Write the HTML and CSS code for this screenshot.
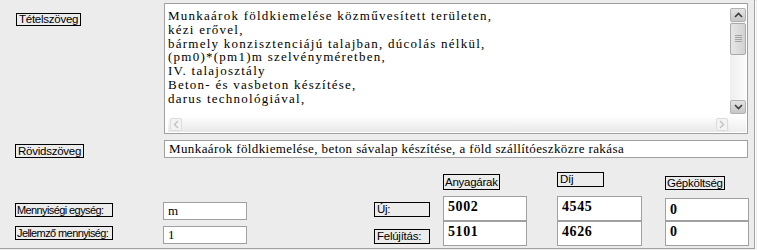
FILE: index.html
```html
<!DOCTYPE html>
<html lang="hu">
<head>
<meta charset="utf-8">
<title>Tétel</title>
<link rel="stylesheet" href="styles.css">
</head>
<body>
<div class="page">
  <div class="row row-memo">
    <div class="cell-label cell-first"><span class="lbl lbl-first">Tételszöveg</span></div>
    <div class="memo">
      <div class="memo-text">Munkaárok földkiemelése közművesített területen,<br>kézi erővel,<br>bármely konzisztenciájú talajban, dúcolás nélkül,<br>(pm0)*(pm1)m szelvényméretben,<br>IV. talajosztály<br>Beton- és vasbeton készítése,<br>darus technológiával,</div>
      <div class="vscroll">
        <div class="sb-btn"><svg width="9" height="6" viewBox="0 0 9 6"><polyline points="1,5 4.5,1.5 8,5" fill="none" stroke="#3c3c3c" stroke-width="1.6"/></svg></div>
        <div class="sb-thumb"><svg width="7" height="8" viewBox="0 0 7 8"><path d="M0 .5h7M0 2.5h7M0 4.5h7M0 6.5h7" stroke="#a4a4a4" stroke-width="1"/></svg></div>
        <div class="sb-fill"></div>
        <div class="sb-btn"><svg width="9" height="6" viewBox="0 0 9 6"><polyline points="1,1 4.5,4.5 8,1" fill="none" stroke="#3c3c3c" stroke-width="1.6"/></svg></div>
      </div>
      <div class="hscroll">
        <div class="hb"><svg width="6" height="9" viewBox="0 0 6 9"><polyline points="5,1 1.5,4.5 5,8" fill="none" stroke="#c4c4c4" stroke-width="1.5"/></svg></div>
        <div class="hb"><svg width="6" height="9" viewBox="0 0 6 9"><polyline points="1,1 4.5,4.5 1,8" fill="none" stroke="#c4c4c4" stroke-width="1.5"/></svg></div>
      </div>
      <div class="corner"></div>
    </div>
  </div>

  <div class="row row-short">
    <div class="cell-label cell-short"><span class="lbl">Rövidszöveg</span></div>
    <div class="field field-wide">Munkaárok földkiemelése, beton sávalap készítése, a föld szállítóeszközre rakása</div>
  </div>

  <div class="bottom">
    <div class="col col-a">
      <span class="lbl lbl-wide">Mennyiségi egység:</span>
      <span class="lbl lbl-wide">Jellemző mennyiség:</span>
    </div>
    <div class="col col-b">
      <div class="field field-sm">m</div>
      <div class="field field-sm">1</div>
    </div>
    <div class="col col-c">
      <span class="lbl lbl-c">Új:</span>
      <span class="lbl lbl-c">Felújítás:</span>
    </div>
    <div class="col col-d">
      <span class="lbl lbl-anyag">Anyagárak</span>
      <div class="nums">
        <div class="num w84">5002</div>
        <div class="num w84">5101</div>
      </div>
    </div>
    <div class="col col-e">
      <span class="lbl lbl-dij">Díj</span>
      <div class="nums">
        <div class="num w85">4545</div>
        <div class="num w85">4626</div>
      </div>
    </div>
    <div class="col col-f">
      <span class="lbl lbl-gep">Gépköltség</span>
      <div class="nums">
        <div class="num w84 num-short">0</div>
        <div class="num w84">0</div>
      </div>
    </div>
  </div>
</div>
</body>
</html>
```

FILE: styles.css
```css
html, body {
  margin: 0;
  padding: 0;
}
body {
  background: #ececec;
  font-family: "Liberation Sans", Arial, sans-serif;
  color: #000;
}
.page {
  width: 754px;
  height: 248px;
  border-right: 1px solid #a2a2a2;
  border-bottom: 1px solid #a2a2a2;
  box-shadow: 1px 1px 0 #ffffff;
}
.row {
  display: grid;
  grid-template-columns: 164px 584px;
}
.row-memo {
  padding-top: 3px;
}
.cell-label {
  padding-left: 15px;
}
.cell-first {
  padding-left: 16px;
  padding-top: 9px;
}
.lbl {
  display: inline-block;
  box-sizing: border-box;
  border: 1px solid #000;
  font-size: 11.5px;
  letter-spacing: -0.25px;
  line-height: 12px;
  height: 14px;
  padding: 0 2px;
  white-space: nowrap;
  overflow: hidden;
}
.lbl-first {
  height: 13px;
  line-height: 11px;
}

/* memo */
.memo {
  box-sizing: border-box;
  height: 131px;
  border: 1px solid #a0a0a0;
  background: #fff;
  display: grid;
  grid-template-columns: 1fr 16px;
  grid-template-rows: 1fr 15px;
  row-gap: 3px;
  padding: 4px 1px 1px 3px;
}
.memo-text {
  font-family: "Liberation Serif", "Times New Roman", serif;
  font-size: 13px;
  line-height: 13.8px;
  letter-spacing: 1.25px;
  white-space: nowrap;
  overflow: hidden;
  padding-top: 1px;
}
.vscroll {
  display: flex;
  flex-direction: column;
  background: linear-gradient(to right, #eeeeee, #fbfbfb);
}
.sb-btn {
  box-sizing: border-box;
  height: 14px;
  border: 1px solid #b2b2b2;
  border-radius: 2px;
  background: linear-gradient(#e4e4e4, #c6c6c6);
  display: flex;
  align-items: center;
  justify-content: center;
}
.sb-thumb {
  box-sizing: border-box;
  margin-top: 1px;
  height: 32px;
  border: 1px solid #a9a9a9;
  border-radius: 2px;
  background: linear-gradient(to right, #e6e6e6, #d2d2d2);
  display: flex;
  align-items: center;
  justify-content: center;
}
.sb-fill {
  flex: 1;
}
.hscroll {
  display: flex;
  justify-content: space-between;
  align-items: center;
  padding: 0 2px;
  background: linear-gradient(#fdfdfd, #e8e8e8);
}
.hb {
  box-sizing: border-box;
  width: 12px;
  height: 13px;
  border: 1px solid #dcdcdc;
  border-radius: 2px;
  background: #f3f3f3;
  display: flex;
  align-items: center;
  justify-content: center;
}
.corner {
  background: linear-gradient(#fdfdfd, #eeeeee);
}

/* short text */
.row-short {
  margin-top: 6px;
}
.cell-short {
  padding-top: 4px;
}
.field {
  box-sizing: border-box;
  border: 1px solid #a0a0a0;
  background: #fff;
  font-family: "Liberation Serif", "Times New Roman", serif;
  white-space: nowrap;
  overflow: hidden;
}
.field-wide {
  height: 18px;
  font-size: 13px;
  line-height: 16px;
  letter-spacing: 0.4px;
  padding: 0 4px;
}

/* bottom grid */
.bottom {
  display: grid;
  grid-template-columns: 148px 211px 69px 114px 108px 84px;
  padding-left: 15px;
  margin-top: 10px;
}
.col {
  display: flex;
  flex-direction: column;
  align-items: flex-start;
}
.col-a {
  padding-top: 31px;
  gap: 9px;
}
.lbl-wide {
  width: 98px;
  padding: 0 1px;
  font-size: 11px;
  letter-spacing: -0.6px;
}
.col-b {
  padding-top: 30px;
  gap: 6px;
}
.field-sm {
  width: 84px;
  height: 18px;
  font-size: 13px;
  line-height: 16px;
  padding: 0 4px;
}
.col-c {
  padding-top: 30px;
  gap: 12px;
}
.lbl-c {
  width: 56px;
  height: 15px;
  line-height: 13px;
  padding: 0 2px;
}
.col-d {
  padding-top: 2px;
  gap: 6px;
}
.lbl-anyag {
  height: 16px;
  line-height: 14px;
  padding: 0 1px;
}
.col-e {
  padding-top: 0;
  gap: 9px;
}
.lbl-dij {
  width: 47px;
  height: 15px;
  line-height: 13px;
}
.col-f {
  padding-top: 4px;
  gap: 8px;
}
.lbl-gep {
  height: 14px;
  padding: 0 1px;
}
.nums {
  display: flex;
  flex-direction: column;
}
.num {
  box-sizing: border-box;
  height: 25px;
  border: 1px solid #a0a0a0;
  background: #fff;
  font-family: "Liberation Serif", "Times New Roman", serif;
  font-weight: bold;
  font-size: 14px;
  line-height: 15px;
  letter-spacing: 0.6px;
  padding: 2px 4px 0;
}
.num-short {
  height: 23px;
  padding-top: 3px;
}
.w84 {
  width: 84px;
}
.w85 {
  width: 85px;
}
```
